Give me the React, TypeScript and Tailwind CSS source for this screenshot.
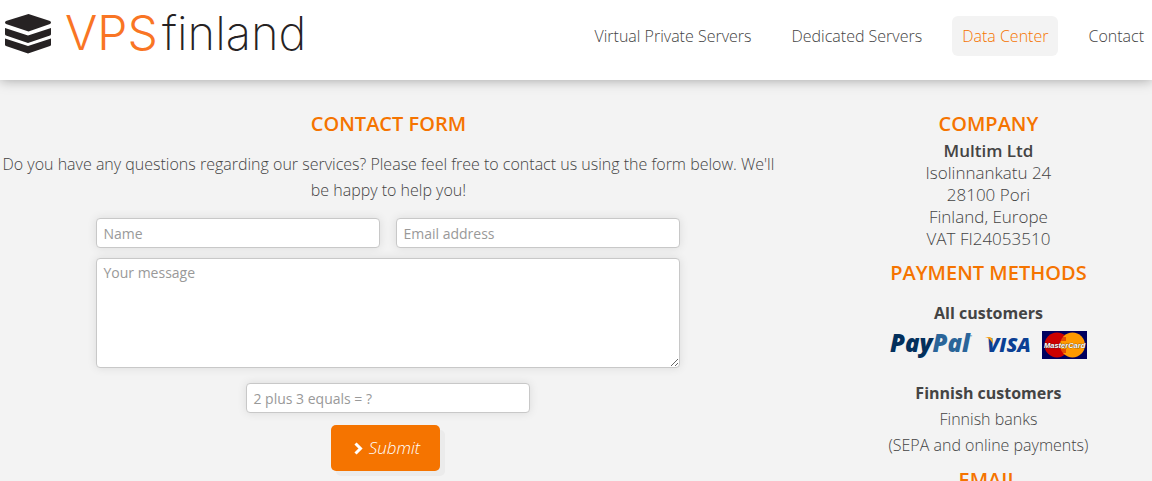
import React from 'react'

const links = ['Virtual Private Servers', 'Dedicated Servers', 'Data Center', 'Contact']

const fieldClass =
  'rounded-[4px] border border-[#c8c8c8] bg-white px-1.5 text-sm text-[#444] shadow-[0_0_10px_rgba(0,0,0,0.1)] placeholder:text-[#999] focus:outline-none'

function Logo() {
  return (
    <a href="#" aria-label="VPSfinland" className="flex items-center">
      <svg width="48" height="40" viewBox="0 0 48 40" fill="#262223">
        <path d="M24.500 0 L46 7 Q48 8.500 46 10 L24.500 17.500 L2 10 Q0 8.500 2 7 Z" />
        <path d="M1 14 L24 21.500 L47 14 V20 Q47 21 46 21.500 L24 29 L2 21.500 Q1 21 1 20 Z" />
        <path d="M1 24.500 L24 32 L47 24.500 V30.500 Q47 31.500 46 32 L24 39.500 L2 32 Q1 31.500 1 30.500 Z" />
      </svg>
      <svg width="270" height="60" viewBox="0 0 270 60">
        <text x="13" y="46" fill="#f97524" fontSize="48" fontWeight="300" fontFamily="Inter, sans-serif">VPS</text>
        <text x="110" y="46" fill="#262223" fontSize="47" fontWeight="200" fontFamily="Inter, sans-serif">finland</text>
      </svg>
    </a>
  )
}

function Header() {
  return (
    <header className="flex h-20 items-start justify-between bg-white pl-1 shadow-[0_0_12px_rgba(0,0,0,0.35)]">
      <div className="pt-1">
        <Logo />
      </div>
      <nav className="-mr-0.5 flex gap-5 pt-4">
        {links.map((link) => (
          <a
            key={link}
            href="#"
            className={
              link === 'Data Center'
                ? 'rounded-md bg-[#f3f3f3] px-2.5 text-base leading-10 text-[#f57400]'
                : 'rounded-md px-2.5 text-base leading-10'
            }>
            {link}
          </a>
        ))}
      </nav>
    </header>
  )
}

function Title({ children }: { children: React.ReactNode }) {
  return <h2 className="text-xl leading-7 font-semibold text-[#f57400] uppercase">{children}</h2>
}

function ContactForm() {
  return (
    <section>
      <Title>Contact form</Title>
      <p className="mt-[13px] leading-[26px]">
        Do you have any questions regarding our services? Please feel free to contact us using the form
        below. We'll be happy to help you!
      </p>
      <form className="mx-auto mt-[15px] flex max-w-[584px] flex-col items-center font-normal">
        <div className="grid w-full grid-cols-2 gap-4">
          <input type="text" aria-label="Name" placeholder="Name" className={`h-[30px] ${fieldClass}`} />
          <input type="email" aria-label="Email address" placeholder="Email address" className={`h-[30px] ${fieldClass}`} />
        </div>
        <textarea
          aria-label="Your message"
          placeholder="Your message"
          className={`mt-2.5 h-[110px] w-full py-1 ${fieldClass}`}
        />
        <input
          type="text"
          aria-label="2 plus 3 equals"
          placeholder="2 plus 3 equals = ?"
          className={`mt-[15px] h-[30px] w-[284px] ${fieldClass}`}
        />
        <button
          type="submit"
          className="mt-3 mr-1.5 flex h-[46px] items-center gap-1 rounded-[5px] bg-[#f57400] px-5 text-[17px] font-light text-white italic shadow-[5px_5px_0_#ebebeb]">
          <svg width="14" height="14" viewBox="0 0 14 14" fill="none" stroke="#fff" strokeWidth="3">
            <path d="M4.500 2.500 L9.500 7.500 L4.500 12.500" />
          </svg>
          Submit
        </button>
      </form>
    </section>
  )
}

function PaymentLogos() {
  return (
    <div className="flex items-center justify-center gap-2.5">
      <svg width="86" height="30" viewBox="0 0 86 30" className="overflow-visible" fontFamily="'Open Sans', sans-serif" fontWeight="800" fontStyle="italic" fontSize="24">
        <text x="1" y="22" fill="#03305c">
          Pay<tspan fill="#2a6599">Pal</tspan>
        </text>
        <text x="80" y="8" fontSize="4" fontWeight="400" fill="#2a6599">™</text>
      </svg>
      <svg width="47" height="30" viewBox="0 0 47 30">
        <text x="2" y="22" fill="#0a3f94" fontFamily="'Open Sans', sans-serif" fontWeight="800" fontStyle="italic" fontSize="20">VISA</text>
        <path d="M0 7 H5 Q8 8 8 14 Q5 8 0 7Z" fill="#f7a51c" />
      </svg>
      <svg width="45" height="28" viewBox="0 0 45 28">
        <rect width="45" height="28" fill="#00005f" />
        <circle cx="15" cy="14" r="12.500" fill="#cc0000" />
        <circle cx="30.500" cy="14" r="12.500" fill="#ff9900" />
        <path d="M19 7h5M18 9h6M18 19h6M19 21h5" stroke="#cc0000" />
        <text x="2" y="17" fill="#fff" stroke="#222" strokeWidth="0.500" paintOrder="stroke" fontFamily="'Liberation Sans', sans-serif" fontWeight="700" fontStyle="italic" fontSize="7.500">MasterCard</text>
      </svg>
    </div>
  )
}

function Sidebar() {
  return (
    <aside>
      <Title>Company</Title>
      <address className="mt-0.5 text-[17px] leading-[22px] not-italic">
        <strong className="font-semibold">Multim Ltd</strong>
        <br />
        Isolinnankatu 24
        <br />
        28100 Pori
        <br />
        Finland, Europe
        <br />
        VAT FI24053510
      </address>
      <div className="mt-[9px]">
        <Title>Payment methods</Title>
      </div>
      <p className="mt-[13px] leading-[26px] font-bold">All customers</p>
      <div className="mt-1">
        <PaymentLogos />
      </div>
      <p className="mt-5 leading-[26px]">
        <strong className="font-bold">Finnish customers</strong>
        <br />
        Finnish banks
        <br />
        (SEPA and online payments)
      </p>
      <div className="mt-2">
        <Title>Email</Title>
      </div>
    </aside>
  )
}

export default function App() {
  return (
    <div className="h-screen overflow-hidden bg-[#f3f3f3] font-['Open_Sans',sans-serif] font-light text-[#444]">
      <Header />
      <main className="grid grid-cols-[19fr_8fr] gap-12 pt-[30px] text-center">
        <ContactForm />
        <Sidebar />
      </main>
    </div>
  )
}
